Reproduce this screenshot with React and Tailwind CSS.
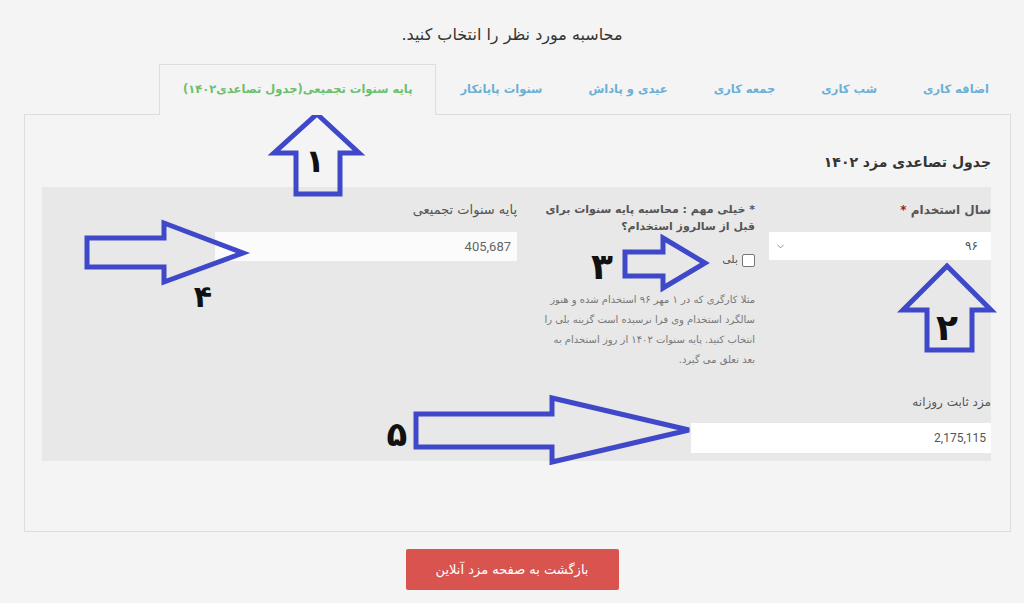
import { ChevronDown } from 'lucide-react'

const tabs = [
  { label: 'اضافه کاری' },
  { label: 'شب کاری' },
  { label: 'جمعه کاری' },
  { label: 'عیدی و پاداش' },
  { label: 'سنوات پایانکار' },
  { label: 'پایه سنوات تجمیعی(جدول تصاعدی۱۴۰۲)', active: true },
]

// blue hand-drawn annotation arrows sitting on top of the page
function Annotations() {
  const stroke = '#3f48c8'
  const arrows = [
    '317,114 359,153 340,153 340,194 296,194 296,153 274,153',
    '947,266 991,310 972,310 972,350 927,350 927,310 903,310',
    '625,252 663,252 663,238 705,263 663,288 663,276 625,276',
    '87,238 164,238 164,223 243,253 164,282 164,267 87,267',
    '416,414 552,414 552,398 689,430 552,462 552,447 416,447',
  ]
  const digits = [
    { t: '۱', x: 315, y: 172, s: 32 },
    { t: '۲', x: 947, y: 340, s: 36 },
    { t: '۳', x: 602, y: 279, s: 36 },
    { t: '۴', x: 203, y: 307, s: 30 },
    { t: '۵', x: 397, y: 446, s: 34 },
  ]
  return (
    <svg className="absolute left-0 top-0 pointer-events-none" width="1024" height="603" viewBox="0 0 1024 603">
      {arrows.map((p, i) => (
        <polygon key={i} points={p} fill="none" stroke={stroke} strokeWidth="5" strokeLinejoin="miter" />
      ))}
      {digits.map(d => (
        <text key={d.t} x={d.x} y={d.y} fontSize={d.s} fontWeight="700" textAnchor="middle" fill="#111" fontFamily="DejaVu Sans, sans-serif">
          {d.t}
        </text>
      ))}
    </svg>
  )
}

export default function App() {
  return (
    <div dir="rtl" className="relative min-h-[603px] bg-[#f4f4f4] font-['DejaVu_Sans',sans-serif] text-[#333]">
      <div className="pt-[22px] text-center text-[16px] leading-[26px]">محاسبه مورد نظر را انتخاب کنید.</div>

      <div className="pr-[13px] pl-[24px] pt-[17px]">
        <div className="flex items-end h-[50px]">
          {tabs.map(t => (
            <div
              key={t.label}
              className={
                t.active
                  ? 'h-[51px] px-[23px] flex items-center border border-b-0 border-[#ddd] bg-[#f4f4f4] text-[11.5px] font-bold text-[#6cbf6c] relative z-10'
                  : 'h-[50px] px-[22px] ml-[2px] flex items-center text-[11.5px] font-bold text-[#6cafd6]'
              }
            >
              {t.label}
            </div>
          ))}
        </div>

        <div className="-mt-px h-[418px] border border-[#ddd] pr-[19px] pl-[17px] pt-[36px]">
          <h2 className="text-[14px] font-bold text-[#333] leading-[22px]">جدول تصاعدی مزد ۱۴۰۲</h2>

          <div className="mt-[14px] bg-[#e8e8e8] pt-[14px] pb-[8px]">
            <div className="flex items-start">
              <div className="w-[222px]">
                <div className="text-[12px] font-bold text-[#555] leading-[18px]">
                  سال استخدام <span className="text-[#a01c1c]">*</span>
                </div>
                <div className="mt-[13px] h-[28px] bg-white flex items-center justify-between pr-[13px] pl-[6px] text-[12px] text-[#555]">
                  <span>۹۶</span>
                  <ChevronDown size={11} strokeWidth={2} className="text-[#888]" />
                </div>
              </div>

              <div className="w-[222px] mr-[14px]">
                <div className="text-[11px] font-bold text-[#555] leading-[17px]">
                  * خیلی مهم : محاسبه پایه سنوات برای قبل از سالروز استخدام؟
                </div>
                <label className="mt-[17px] flex items-center gap-[4px] text-[11px] text-[#555]">
                  <span className="w-[13px] h-[13px] bg-white border border-[#767676] rounded-[2px]" />
                  <span>بلی</span>
                </label>
                <p className="mt-[21px] text-[10px] leading-[20px] text-[#777] w-[215px]">
                  مثلا کارگری که در ۱ مهر ۹۶ استخدام شده و هنوز سالگرد استخدام وی فرا نرسیده است گزینه بلی را انتخاب کنید. پایه سنوات ۱۴۰۲ از روز استخدام به بعد تعلق می گیرد.
                </p>
              </div>

              <div className="w-[302px] mr-[16px]">
                <div className="text-[13px] text-[#555] leading-[18px]">پایه سنوات تجمیعی</div>
                <div className="mt-[13px] h-[29px] bg-[#fbfbfb] flex items-center pr-[6px] text-[13px] text-[#666] font-['Roboto',sans-serif]">
                  405,687
                </div>
              </div>
            </div>

            <div className="mt-[23px] w-[300px]">
              <div className="text-[12px] text-[#555] leading-[18px]">مزد ثابت روزانه</div>
              <div className="mt-[12px] h-[30px] bg-white flex items-center pr-[5px] text-[12px] text-[#555] font-['Roboto',sans-serif]">
                2,175,115
              </div>
            </div>
          </div>
        </div>
      </div>

      <div className="flex justify-center pt-[17px]">
        <button className="w-[213px] h-[41px] rounded-[2px] bg-[#d9534f] text-white text-[13px]">بازگشت به صفحه مزد آنلاین</button>
      </div>

      <Annotations />
    </div>
  )
}
